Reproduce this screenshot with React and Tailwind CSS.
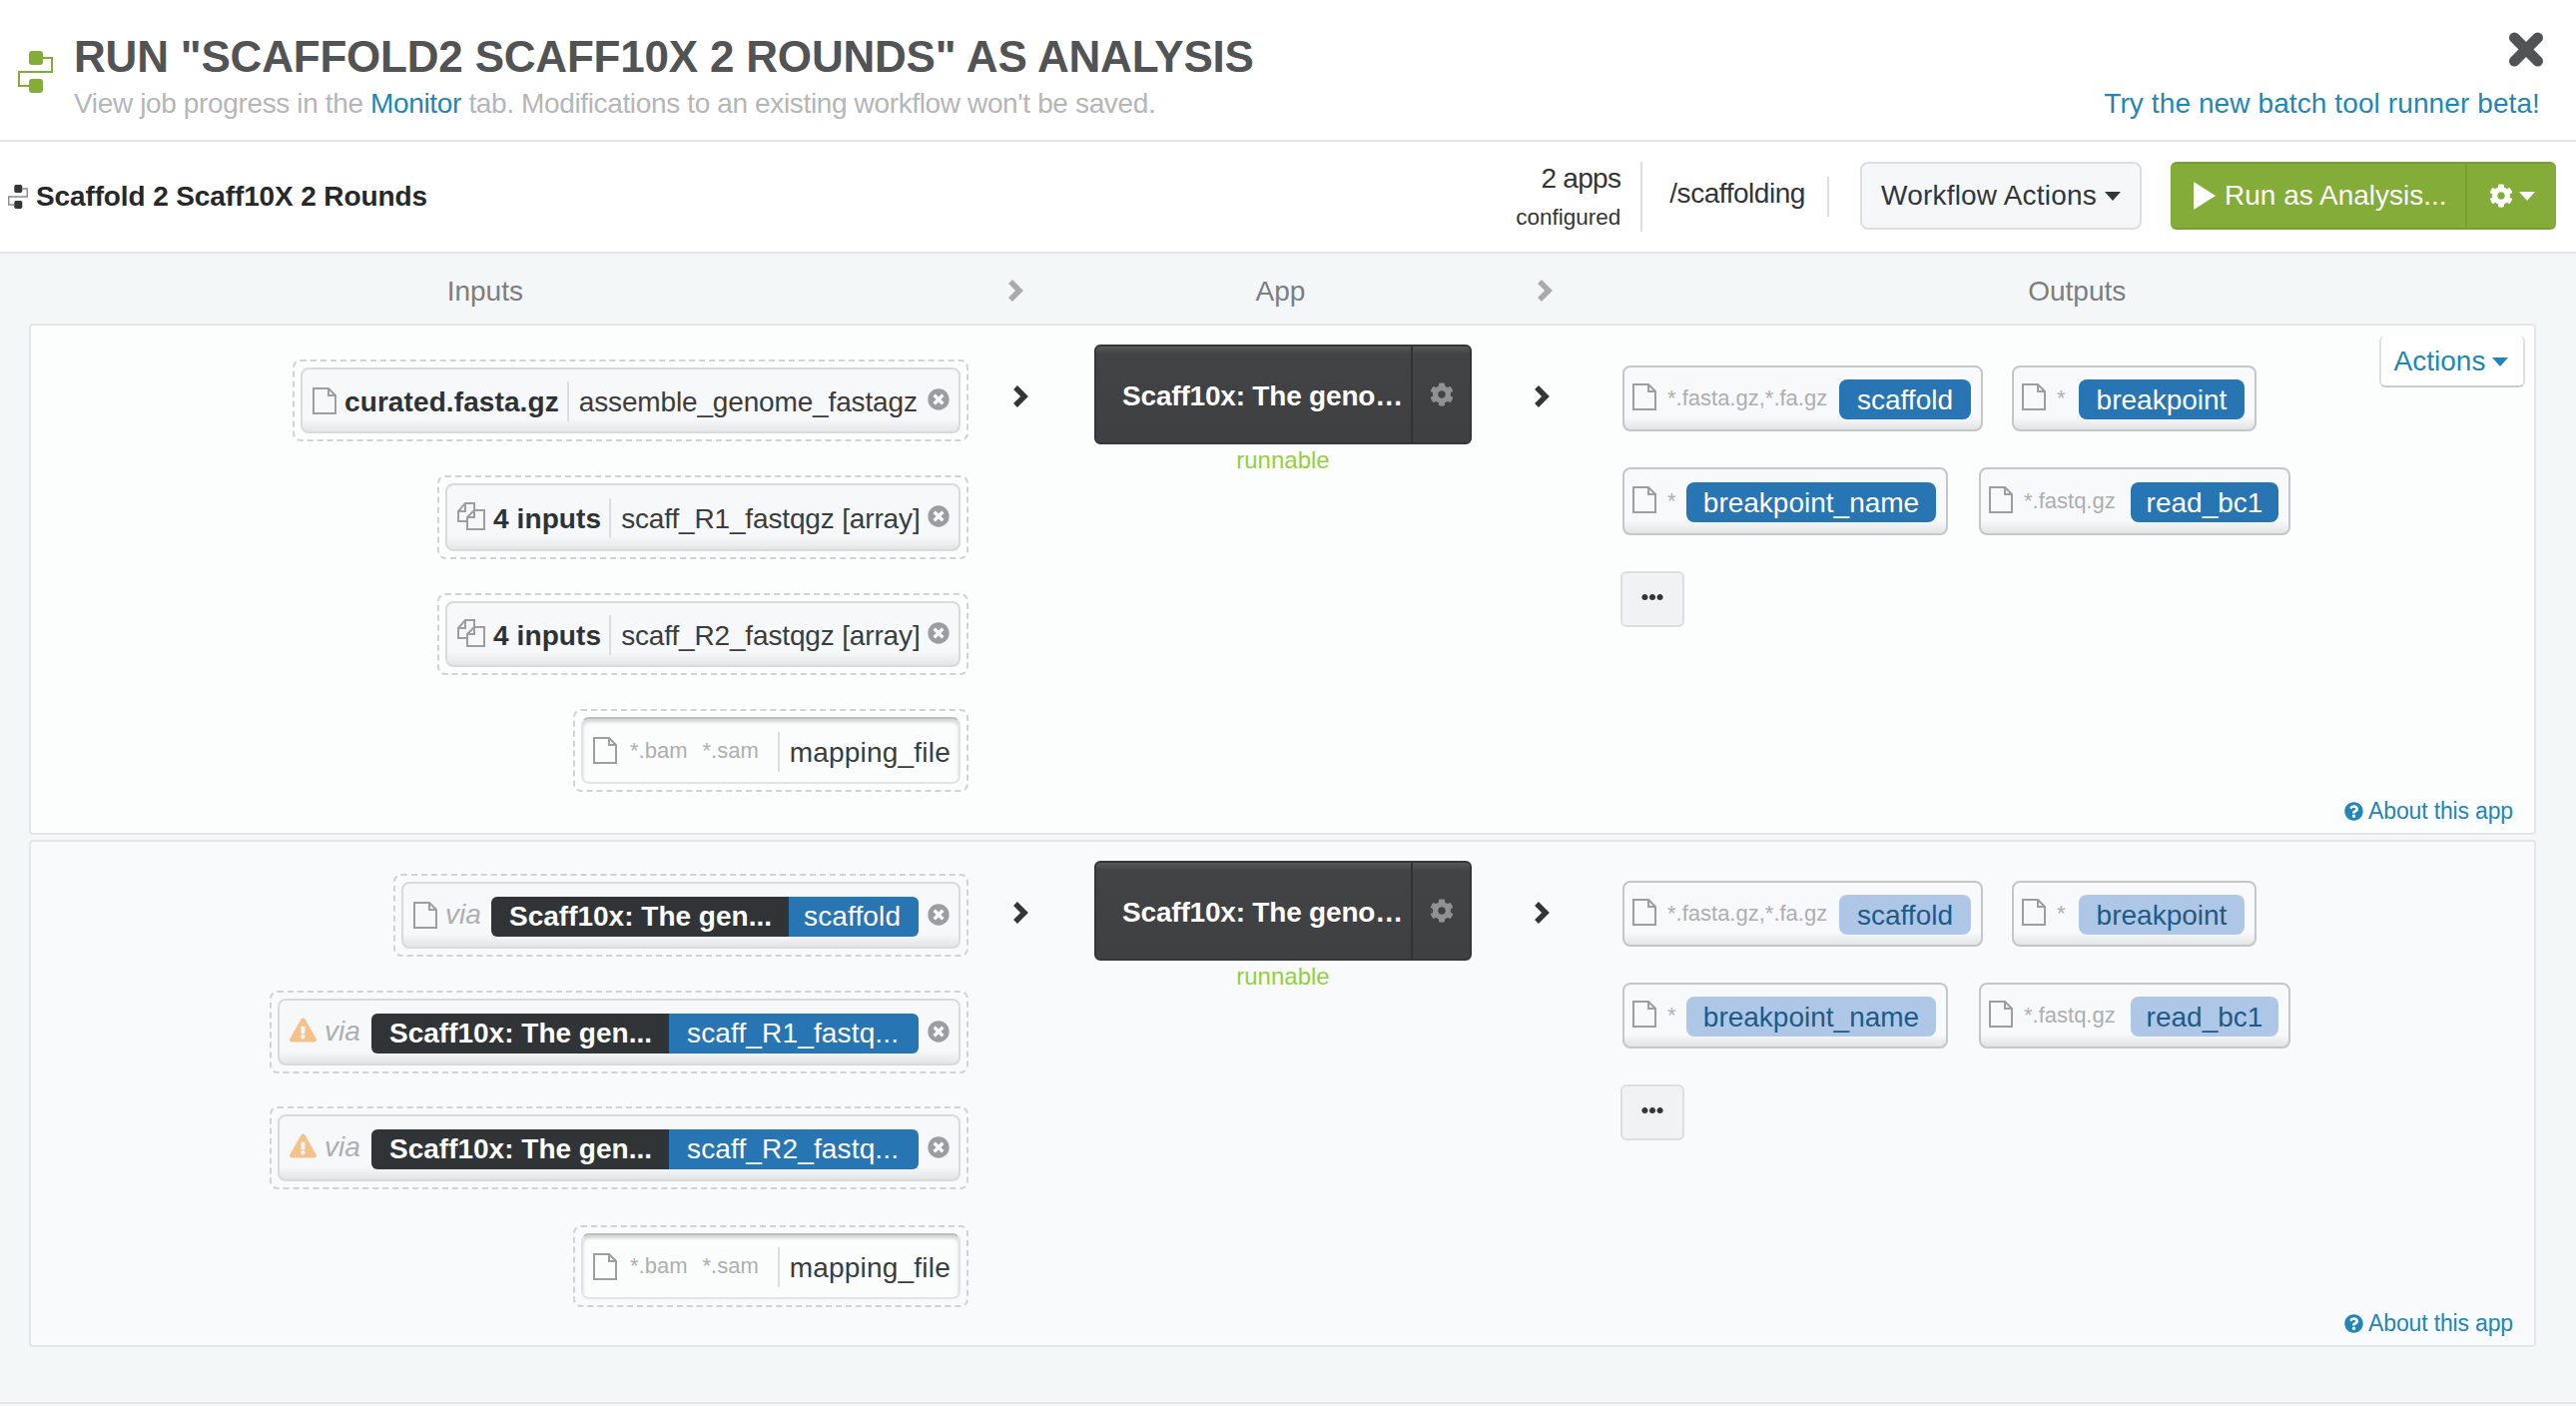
import React from "react";
import { FaCog, FaQuestionCircle, FaTimesCircle, FaExclamationTriangle, FaEllipsisH } from "react-icons/fa";

function Logo({ dark }) {
  const fill = dark ? "#333638" : "#84ac39";
  const line = dark ? "#8a8c8e" : "#84ac39";
  return (
    <svg viewBox="0 0 35 42" className={dark ? "w-[20px] h-[24px] shrink-0" : "w-[35px] h-[42px] shrink-0"}>
      <path d="M25 7H34V21H1V35H11" fill="none" stroke={line} strokeWidth={dark ? 3 : 2} />
      <rect x="11" y="0" width="14" height="14" rx="3" fill={fill} />
      <rect x="11" y="28" width="14" height="14" rx="3" fill={fill} />
    </svg>
  );
}

function FileIcon() {
  return (
    <svg viewBox="0 0 24 27" className="w-[24px] h-[27px] shrink-0">
      <path d="M1 1H16L23 8V26H1ZM16 1V8H23" fill="none" stroke="#9c9ea0" strokeWidth="2" />
    </svg>
  );
}

function CopyIcon() {
  return (
    <svg viewBox="0 0 28 28" className="w-[28px] h-[28px] shrink-0 -mt-[3px]">
      <path d="M10 19H1V9L8 1H17V8" fill="none" stroke="#9c9ea0" strokeWidth="2" />
      <path d="M1 9H8V1" fill="none" stroke="#9c9ea0" strokeWidth="2" />
      <path d="M10 27V15L17 8H27V27ZM10 15H17V8" fill="#f6f8f9" stroke="#9c9ea0" strokeWidth="2" />
    </svg>
  );
}

function Chevron({ color }) {
  return (
    <svg viewBox="0 0 17 24" className="w-[17px] h-[24px] shrink-0">
      <polyline points="3,3 12,12 3,21" fill="none" stroke={color} strokeWidth="5.5" />
    </svg>
  );
}

function Caret({ color }) {
  return (
    <span className={`w-0 h-0 border-x-[8px] border-x-transparent border-t-[9px] ${color} shrink-0`} />
  );
}

function Close() {
  return <FaTimesCircle className="text-[22px] text-[#9b9da0] shrink-0 -mt-[2px]" />;
}

function Dashed({ w, h, mt, filled, children }) {
  return (
    <div className={`${w} ${h} ${mt} p-[6px] border-2 border-dashed border-[#d0d2d4] rounded-lg`}>
      <div
        className={
          filled
            ? "h-full rounded-lg border-2 border-[#d8dadc] bg-linear-to-b from-[#f6f8f9] from-80% to-[#e3e5e7] flex items-center pl-[10px] pr-[9px] whitespace-nowrap"
            : "h-full rounded-lg border-2 border-[#e0e4e6] border-t-[#bcbec0] bg-[#fbfcfc] shadow-[inset_0_3px_3px_#d4d6d8] flex items-center pl-[10px] pr-[9px] whitespace-nowrap"
        }
      >
        {children}
      </div>
    </div>
  );
}

function Divider({ ml, mr }) {
  return <div className={`w-[2px] h-[40px] mt-[2px] bg-[#dcdee0] shrink-0 ${ml} ${mr}`} />;
}

function NamedInput({ w, h, mt, icon, name, label }) {
  return (
    <Dashed w={w} h={h} mt={mt} filled>
      {icon}
      <span className="ml-[8px] mt-[4px] font-bold text-[#2f3234] tracking-[0.1px]">{name}</span>
      <Divider ml="ml-[8px]" mr="mr-[10px]" />
      <span className="mt-[4px] text-[#3a3c3e] tracking-[-0.15px]">{label}</span>
      <span className="ml-auto flex"><Close /></span>
    </Dashed>
  );
}

function MappingInput({ mt, h }) {
  return (
    <Dashed w="w-[396px]" h={h} mt={mt}>
      <FileIcon />
      <span className="ml-[13px] text-[22px] text-[#adafb1]">*.bam</span>
      <span className="ml-[15px] text-[22px] text-[#adafb1]">*.sam</span>
      <Divider ml="ml-[19px]" mr="mr-[10px]" />
      <span className="mt-[4px] text-[#3a3c3e] tracking-[0.2px]">mapping_file</span>
    </Dashed>
  );
}

function ViaInput({ w, mt, warn, out }) {
  return (
    <Dashed w={w} h="h-[83px]" mt={mt} filled>
      {warn ? <FaExclamationTriangle className="text-[27px] text-[#f6c28b] shrink-0 -mt-[4px]" /> : <FileIcon />}
      <span className="ml-[8px] italic text-[#adafb1] -mt-[2px]">via</span>
      <div className="ml-auto mt-[2px] flex h-[40px] rounded-md overflow-hidden items-center text-white">
        <span className="h-full w-[298px] bg-[#303436] font-bold flex items-center pl-[18px] pt-[1px]">Scaff10x: The gen...</span>
        <span className={`h-full bg-[#2776b3] flex items-center pt-[1px] tracking-[0.15px] ${warn ? "w-[250px] pl-[18px]" : "w-[130px] pl-[15px]"}`}>{out}</span>
      </div>
      <span className="ml-[9px] flex"><Close /></span>
    </Dashed>
  );
}

function OutCard({ w, h, ext, chip, muted, chipW }) {
  return (
    <div className={`${w} ${h} rounded-lg border-2 border-[#c4c6c8] bg-linear-to-b from-[#f8f9fa] from-80% to-[#e2e4e6] flex items-center pl-[8px] pr-[10px] whitespace-nowrap`}>
      <span className="-mt-[3px] flex"><FileIcon /></span>
      <span className="ml-[11px] text-[22px] text-[#adafb1] -mt-[1px]">{ext}</span>
      <span className={`ml-auto mt-[2px] ${chipW} h-[40px] pt-[1px] rounded-lg flex items-center justify-center ${muted ? "bg-[#afc7e6] text-[#1f5a87]" : "bg-[#2776b3] text-white"}`}>{chip}</span>
    </div>
  );
}

function AppBox() {
  return (
    <div>
      <div className="h-[100px] w-[378px] rounded-md border-2 border-[#333537] bg-linear-to-b from-[#57585a] from-0% via-[#424345] via-8% to-[#3f4042] flex items-stretch text-white">
        <div className="w-[317px] flex items-center justify-end font-bold pr-[8px] pt-[3px] tracking-[-0.2px] whitespace-nowrap border-r-2 border-[#2f3133]">Scaff10x: The geno…</div>
        <div className="flex-1 flex items-center justify-center"><FaCog className="text-[24px] text-[#8f9193]" /></div>
      </div>
      <div className="text-center text-[24px] leading-[32px] text-[#93d03c]">runnable</div>
    </div>
  );
}

function Panel({ rows, outputs, bg, height, pt, out, mt }) {
  return (
    <div className={`ml-[29px] w-[2511px] ${height} ${mt} ${bg} border-2 border-[#e1e6e8] rounded-sm flex`}>
      <div className={`w-[939px] shrink-0 ${pt} flex flex-col items-end`}>{rows}</div>
      <div className="w-[126px] shrink-0 pt-[59px] pl-[44px]"><Chevron color="#333537" /></div>
      <div className="shrink-0 pt-[19px]"><AppBox /></div>
      <div className="w-[151px] shrink-0 pt-[59px] pl-[62px]"><Chevron color="#333537" /></div>
      <div className="flex-1 flex">
        <div className="flex-1 flex flex-col">{outputs}</div>
        <div className="flex flex-col items-end justify-between pr-[9px] pt-[11px] pb-[6px]">
          {out}
          <div className="flex items-center gap-[5px] text-[23px] leading-[32px] text-[#1f86b5] pr-[12px] whitespace-nowrap tracking-[-0.15px]">
            <FaQuestionCircle className="text-[19px]" />
            <span>About this app</span>
          </div>
        </div>
      </div>
    </div>
  );
}

function Outputs({ muted, pt, gap, h2 }) {
  return (
    <>
      <div className={`flex ${pt}`}>
        <OutCard w="w-[361px]" h="h-[66px]" ext="*.fasta.gz,*.fa.gz" chip="scaffold" chipW="w-[132px]" muted={muted} />
        <div className="w-[29px]" />
        <OutCard w="w-[245px]" h="h-[66px]" ext="*" chip="breakpoint" chipW="w-[166px]" muted={muted} />
      </div>
      <div className={`flex ${gap}`}>
        <OutCard w="w-[326px]" h={h2} ext="*" chip="breakpoint_name" chipW="w-[250px]" muted={muted} />
        <div className="w-[31px]" />
        <OutCard w="w-[312px]" h={h2} ext="*.fastq.gz" chip="read_bc1" chipW="w-[148px]" muted={muted} />
      </div>
      <div className={`${gap} -ml-[2px] w-[64px] h-[56px] rounded-md border-2 border-[#dcdee0] bg-[#f1f2f4] flex items-start justify-center pt-[13px]`}>
        <FaEllipsisH className="text-[22px] text-[#333537]" />
      </div>
    </>
  );
}

export default function App() {
  return (
    <div className="w-[2580px] h-[1408px] overflow-hidden bg-[#f4f7f8] font-['Liberation_Sans',Arial,sans-serif] text-[28px] leading-[40px]">
      <header className="h-[142px] bg-white border-b-2 border-[#e3e5e6] flex">
        <div className="pl-[18px] pt-[51px]"><Logo /></div>
        <div className="pl-[21px] pt-[29px]">
          <h1 className="text-[44px] leading-[56px] font-bold text-[#525354] whitespace-nowrap tracking-[-0.2px]">RUN "SCAFFOLD2 SCAFF10X 2 ROUNDS" AS ANALYSIS</h1>
          <p className="text-[28px] leading-[36px] text-[#b4b6b8] whitespace-nowrap tracking-[-0.36px] mt-[1px]">
            View job progress in the <span className="text-[#1f86b5]">Monitor</span> tab. Modifications to an existing workflow won't be saved.
          </p>
        </div>
        <div className="ml-auto pr-[36px] flex flex-col items-end pt-[32px]">
          <svg viewBox="0 0 36 36" className="w-[36px] h-[35px] -mr-[4px]">
            <path d="M6 6L30 30M30 6L6 30" fill="none" stroke="#525354" strokeWidth="11" strokeLinecap="round" />
          </svg>
          <a className="mt-[19px] text-[28px] leading-[36px] text-[#1f86b5] whitespace-nowrap tracking-[0.1px]">Try the new batch tool runner beta!</a>
        </div>
      </header>

      <section className="h-[112px] bg-white border-b-2 border-[#e3e5e6] flex items-center pl-[8px] pr-[20px]">
        <Logo dark />
        <span className="ml-[8px] font-bold text-[#26282a] whitespace-nowrap tracking-[-0.12px]">Scaffold 2 Scaff10X 2 Rounds</span>
        <div className="ml-auto text-right text-[#333537] -mt-[2px]">
          <div className="leading-[40px] tracking-[-0.7px]">2 apps</div>
          <div className="text-[22.5px] leading-[32px] mt-[3px]">configured</div>
        </div>
        <div className="w-[2px] h-[70px] bg-[#dcdee0] ml-[20px] mr-[27px]" />
        <span className="-mt-[6px] text-[#333537] tracking-[-0.45px]">/scaffolding</span>
        <div className="w-[2px] h-[40px] bg-[#dcdee0] ml-[22px] mr-[31px]" />
        <button className="-mt-[2px] w-[282px] h-[68px] rounded-lg border-2 border-[#dcdee0] bg-[#f5f7f8] text-[#333537] tracking-[0.2px] flex items-center justify-center gap-[8px]">
          Workflow Actions <Caret color="border-t-[#333537]" />
        </button>
        <div className="-mt-[2px] ml-[29px] h-[68px] w-[386px] rounded-md bg-[#84ac39] border-y-2 border-[#76a030] flex text-white">
          <button className="w-[295px] flex items-center pl-[23px] whitespace-nowrap">
            <span className="w-0 h-0 border-y-[14px] border-y-transparent border-l-[22px] border-l-white mr-[9px]" />
            Run as Analysis...
          </button>
          <button className="flex-1 border-l-2 border-[#76a030] flex items-center justify-center gap-[6px]">
            <FaCog className="text-[24px]" />
            <Caret color="border-t-white" />
          </button>
        </div>
      </section>

      <div className="h-[70px] flex items-center text-[#7c7e80]">
        <div className="w-[972px] pt-[5px] text-center">Inputs</div>
        <div className="w-[37px]" />
        <span className="mt-[4px] flex"><Chevron color="#a8aaac" /></span>
        <div className="w-[514px] pt-[5px] text-center">App</div>
        <span className="mt-[4px] flex"><Chevron color="#a8aaac" /></span>
        <div className="w-[1000px] pt-[5px] ml-[24px] text-center">Outputs</div>
      </div>

      <Panel
        height="h-[512px]"
        bg="bg-[#fcfefe]"
        pt="pt-[34px]"
        rows={
          <>
            <NamedInput w="w-[677px]" h="h-[82px]" mt="" icon={<FileIcon />} name="curated.fasta.gz" label="assemble_genome_fastagz" />
            <NamedInput w="w-[532px]" h="h-[84px]" mt="mt-[34px]" icon={<CopyIcon />} name="4 inputs" label="scaff_R1_fastqgz [array]" />
            <NamedInput w="w-[532px]" h="h-[82px]" mt="mt-[34px]" icon={<CopyIcon />} name="4 inputs" label="scaff_R2_fastqgz [array]" />
            <MappingInput mt="mt-[34px]" h="h-[83px]" />
          </>
        }
        outputs={<Outputs pt="pt-[40px]" gap="mt-[36px]" h2="h-[68px]" />}
        out={
          <button className="w-[146px] h-[52px] rounded-md -mt-[1px] pt-[2px] pr-[2px] border-2 border-t-0 border-[#dcdee0] border-b-[#c9cbcd] bg-white text-[#1f86b5] flex items-center justify-center gap-[7px]">
            Actions <Caret color="border-t-[#1f86b5]" />
          </button>
        }
      />

      <Panel
        mt="mt-[5px]"
        height="h-[508px]"
        bg="bg-[#f8fafb]"
        pt="pt-[32px]"
        rows={
          <>
            <ViaInput w="w-[576px]" mt="" out="scaffold" />
            <ViaInput w="w-[700px]" mt="mt-[34px]" warn out="scaff_R1_fastq..." />
            <ViaInput w="w-[700px]" mt="mt-[33px]" warn out="scaff_R2_fastq..." />
            <MappingInput mt="mt-[36px]" h="h-[82px]" />
          </>
        }
        outputs={<Outputs muted pt="pt-[39px]" gap="mt-[36px]" h2="h-[66px]" />}
        out={<div />}
      />

      <div className="mt-[55px] h-[2px] bg-[#e3e5e6]" />
    </div>
  );
}
